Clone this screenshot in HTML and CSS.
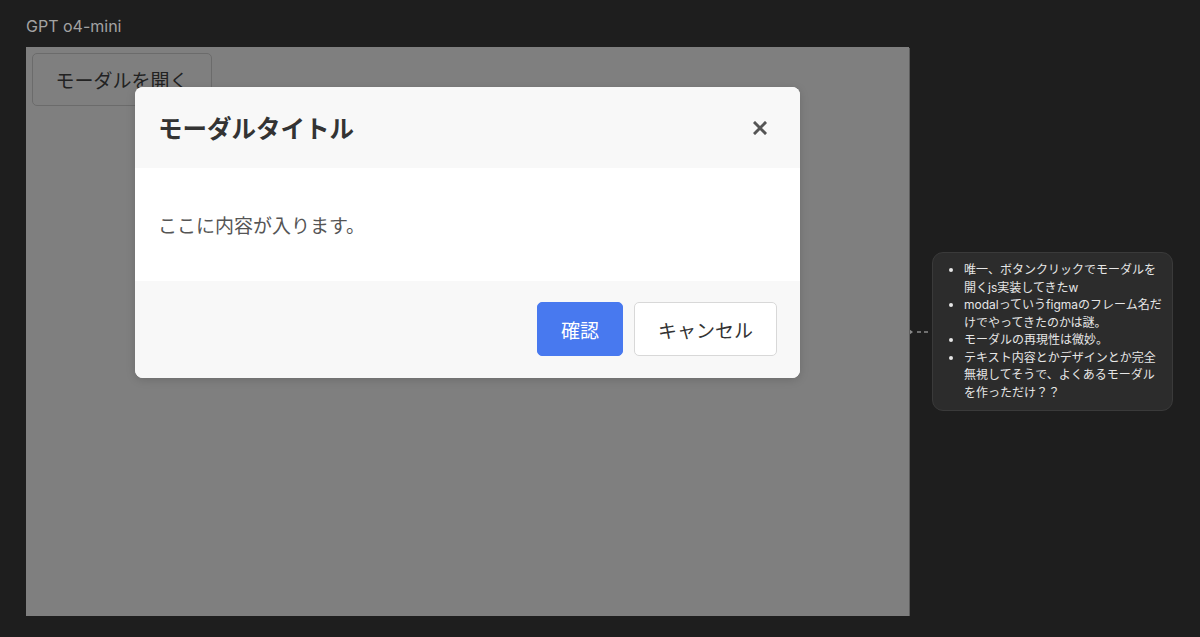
FILE: index.html
```html
<!DOCTYPE html>
<html lang="ja">
<head>
    <meta charset="UTF-8">
    <title>GPT o4-mini</title>
    <link rel="stylesheet" href="styles.css">
</head>
<body>
<div class="label">GPT o4-mini</div>
<div class="row">
    <div class="frame">
        <div class="page">
            <button class="open-btn">モーダルを開く</button>
        </div>
        <!-- 開いた状態のモーダル -->
        <div class="overlay">
            <div class="modal">
                <div class="modal-header">
                    <h2 class="modal-title">モーダルタイトル</h2>
                    <span class="close">
                        <svg width="14" height="14" viewBox="0 0 14 14"><path d="M2 2 L12 12 M12 2 L2 12" stroke="#555" stroke-width="3" stroke-linecap="square"/></svg>
                    </span>
                </div>
                <div class="modal-body">ここに内容が入ります。</div>
                <div class="modal-footer">
                    <button class="btn btn-primary">確認</button>
                    <button class="btn btn-cancel">キャンセル</button>
                </div>
            </div>
        </div>
    </div>
    <div class="connector">
        <svg width="23" height="8" viewBox="0 0 23 8"><path d="M0 1 L4 4 L0 7 Z" fill="#8a8a8a"/><path d="M8 4 H22" stroke="#8a8a8a" stroke-width="1.5" stroke-dasharray="4 3"/></svg>
    </div>
    <div class="comment">
        <ul>
            <li>唯一、ボタンクリックでモーダルを開くjs実装してきたw</li>
            <li>modalっていうfigmaのフレーム名だけでやってきたのかは謎。</li>
            <li>モーダルの再現性は微妙。</li>
            <li>テキスト内容とかデザインとか完全無視してそうで、よくあるモーダルを作っただけ？？</li>
        </ul>
    </div>
</div>
</body>
</html>
```

FILE: styles.css
```css
body{
    margin:0;
    padding:16px 0 0 26px;
    background:#1e1e1e;
    font-family:"Noto Sans","Noto Sans CJK JP",sans-serif;
}
.label{
    font-family:Inter,"Noto Sans",sans-serif;
    font-size:16px;
    line-height:20px;
    color:#a3a3a3;
    margin-bottom:11px;
}
.row{
    display:flex;
    align-items:center;
}
.frame{
    position:relative;
    width:883px;
    height:569px;
    background:#fff;
    overflow:hidden;
    box-shadow:1px 1px 0 #5c5c5c;
}
.page{
    padding:6px;
}
.open-btn{
    height:53px;
    width:180px;
    background:#fff;
    border:1px solid #d6d6d6;
    border-radius:5px;
    font-family:"Noto Sans CJK JP",sans-serif;
    font-size:19px;
    color:#444;
    cursor:pointer;
}
.overlay{
    position:absolute;
    top:0;
    left:0;
    right:0;
    bottom:0;
    background:rgba(0,0,0,0.5);
    display:flex;
    justify-content:center;
    align-items:flex-start;
    padding-top:40px;
}
.modal{
    width:665px;
    background:#fff;
    border-radius:8px;
    overflow:hidden;
    box-shadow:0 2px 10px rgba(0,0,0,0.15);
}
.modal-header{
    height:81px;
    background:#f8f8f8;
    display:flex;
    align-items:center;
    justify-content:space-between;
    padding:0 33px 0 23px;
}
.modal-title{
    margin:0;
    font-family:"Noto Sans CJK JP",sans-serif;
    font-size:24.5px;
    font-weight:bold;
    color:#333;
}
.close{
    display:flex;
    cursor:pointer;
}
.modal-body{
    height:113px;
    padding:0 23px;
    display:flex;
    align-items:center;
    font-family:"Noto Sans CJK JP",sans-serif;
    font-size:19px;
    color:#555;
}
.modal-footer{
    background:#f8f8f8;
    padding:21px 23px 22px;
    display:flex;
    justify-content:flex-end;
    gap:11px;
}
.btn{
    height:54px;
    padding:0 23px;
    border-radius:5px;
    font-family:"Noto Sans CJK JP",sans-serif;
    font-size:19px;
    cursor:pointer;
}
.btn-primary{
    background:#4879ef;
    border:1px solid #4879ef;
    color:#fff;
}
.btn-cancel{
    background:#fff;
    border:1px solid #d8d8d8;
    color:#333;
}
.connector{
    width:23px;
    display:flex;
}
.comment{
    width:241px;
    box-sizing:border-box;
    background:#2c2c2c;
    border:1px solid #3a3a3a;
    border-radius:11px;
    padding:8px 10px 9px 11px;
    font-family:Inter,"Noto Sans CJK JP",sans-serif;
    font-size:12px;
    line-height:17.5px;
    color:#e6e6e6;
}
.comment ul{
    margin:0;
    padding-left:20px;
}
```
